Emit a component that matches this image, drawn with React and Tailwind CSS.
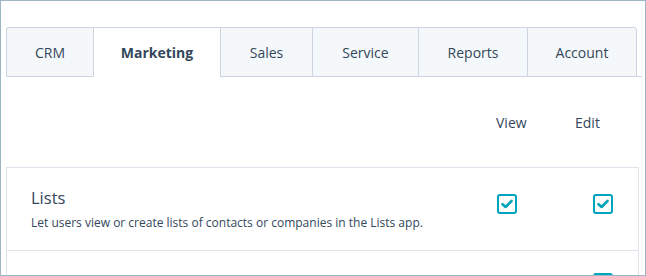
import React from 'react';

const tabs = [
  { label: 'CRM', w: 'w-[87px]' },
  { label: 'Marketing', w: 'w-[127px]', active: true },
  { label: 'Sales', w: 'w-[92px]' },
  { label: 'Service', w: 'w-[106px]' },
  { label: 'Reports', w: 'w-[109px]' },
  { label: 'Account', w: 'w-[110px]' },
];

const Checkbox = () => (
  <span className="flex h-[20px] w-[20px] items-center justify-center rounded-[3px] border-2 border-[#00a4bd] bg-white">
    <svg width="12" height="10" viewBox="0 0 12 10">
      <path d="M1.5 5.2 L4.6 8 L10.5 2" fill="none" stroke="#00a4bd" strokeWidth="2.6" strokeLinecap="round" strokeLinejoin="round" />
    </svg>
  </span>
);

const App = () => {
  return (
    <div
      className="h-[276px] w-[646px] overflow-hidden border border-[#9cb6c3] bg-white text-[#33475b]"
      style={{ fontFamily: '"Open Sans", "Liberation Sans", sans-serif' }}
    >
      {/* tabs */}
      <div className="flex pl-[5px] pr-[3px] pt-[26px]">
        <div className="flex flex-1 border-b border-[#cbd6e2]">
          {tabs.map((t, i) => (
            <div
              key={t.label}
              className={`${t.w} -mb-px flex h-[50px] items-center justify-center border-t border-l border-[#cbd6e2] text-[14px] ${
                t.active ? 'border-b border-b-white bg-white font-bold' : 'border-b bg-[#f5f8fa]'
              } ${i === 0 ? 'rounded-tl-[3px]' : ''} ${i === tabs.length - 1 ? 'rounded-tr-[3px] border-r' : ''}`}
            >
              {t.label}
            </div>
          ))}
        </div>
      </div>

      {/* column headings */}
      <div className="flex h-[90px] items-center pl-[5px] pr-[6px]">
        <div className="flex-1" />
        <div className="w-[79px] text-[14px]">View</div>
        <div className="w-[64px] text-[14px]">Edit</div>
      </div>

      {/* table */}
      <div className="ml-[5px] mr-[6px] border border-[#dfe3eb]">
        <div className="flex h-[83px] items-center border-b border-[#dfe3eb] pl-[24px] pr-[25px]">
          <div className="flex-1">
            <div className="text-[16.5px] leading-[22px]">Lists</div>
            <div className="mt-[6px] text-[12px] leading-[16px]">
              Let users view or create lists of contacts or companies in the Lists app.
            </div>
          </div>
          <div className="mb-[11px] flex items-center">
            <Checkbox />
            <div className="w-[76px]" />
            <Checkbox />
          </div>
        </div>
        <div className="flex items-start pl-[24px] pr-[25px] pt-[22px]">
          <div className="flex-1 text-[16.5px] leading-[22px]">Forms</div>
          <div className="mt-[0px]">
            <Checkbox />
          </div>
        </div>
      </div>
    </div>
  );
};

export default App;
